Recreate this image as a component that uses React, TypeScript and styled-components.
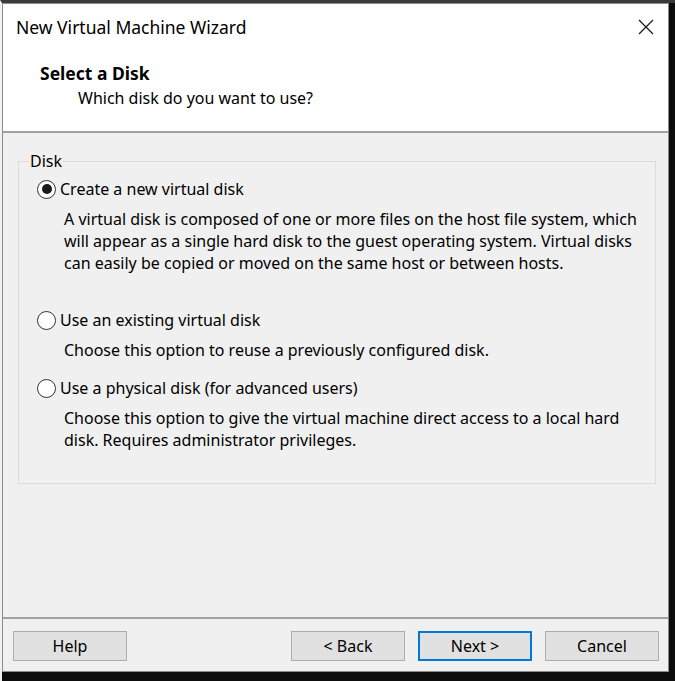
import React from 'react'
import styled, { createGlobalStyle } from 'styled-components'

const Global = createGlobalStyle`
  html, body {
    margin: 0;
    padding: 0;
    background: #0c0c0c;
  }
  * { box-sizing: border-box; }
`

const Screen = styled.div`
  width: 675px;
  height: 681px;
  background: #0c0c0c;
  border-top: 3px solid #3a3a3a;
  border-left: 2px solid #f2f2f2;
  padding-right: 6px;
  padding-bottom: 9px;
  display: flex;
`

const Dialog = styled.div`
  flex: 1;
  display: flex;
  flex-direction: column;
  background: #f0f0f0;
  border: 1px solid #8c8c8c;
  font-family: "Noto Sans", "Open Sans", sans-serif;
  color: #000;
`

const TitleBar = styled.div`
  height: 46px;
  display: flex;
  align-items: center;
  justify-content: space-between;
  padding: 0 14px 0 13px;
  background: #fff;
  font-size: 17.5px;
  color: #000;
`

const CloseIcon = () => (
  <svg width="16" height="16" viewBox="0 0 16 16">
    <path d="M1 1 L15 15 M15 1 L1 15" stroke="#1a1a1a" strokeWidth="1.3" />
  </svg>
)

const Header = styled.div`
  height: 83px;
  background: #fff;
  padding: 12px 0 0 37px;
  border-bottom: 2px solid #a0a0a0;
`

const HeaderTitle = styled.div`
  font-weight: 700;
  font-size: 17.5px;
  line-height: 22px;
`

const HeaderSub = styled.div`
  font-size: 16px;
  line-height: 22px;
  margin-top: 3px;
  padding-left: 38px;
`

const Body = styled.div`
  flex: 1;
  padding: 20px 12px 0 15px;
`

const Group = styled.fieldset`
  margin: 0;
  height: 331px;
  border: 1px solid #dcdcdc;
  border-radius: 0;
  padding: 4px 0 0 18px;
  font-size: 16px;

  legend {
    padding: 0 1px;
    margin-left: -8px;
    line-height: 16px;
  }
`

const Option = styled.div<{ $gap: number }>`
  margin-top: ${p => p.$gap}px;
`

const RadioRow = styled.label`
  display: flex;
  align-items: center;
  gap: 4px;
  line-height: 22px;
`

const Radio = styled.span<{ $on?: boolean }>`
  width: 19px;
  height: 19px;
  border-radius: 50%;
  border: 1.5px solid #333;
  background: #fff;
  display: flex;
  align-items: center;
  justify-content: center;

  &::after {
    content: '';
    width: 10px;
    height: 10px;
    border-radius: 50%;
    background: ${p => (p.$on ? '#1a1a1a' : 'transparent')};
  }
`

const Desc = styled.div`
  margin-top: 8px;
  padding-left: 27px;
  line-height: 22px;
  white-space: nowrap;
`

const Footer = styled.div`
  height: 54px;
  border-top: 2px solid #a0a0a0;
  display: flex;
  align-items: center;
  padding: 2px 9px 0 10px;
  gap: 13px;
`

const Button = styled.button<{ $primary?: boolean }>`
  width: 114px;
  height: 30px;
  background: #e1e1e1;
  border: ${p => (p.$primary ? '2px solid #0078d7' : '1px solid #adadad')};
  font-family: "Noto Sans", "Open Sans", sans-serif;
  font-size: 16px;
  color: #000;
  padding: 0;
`

const Spacer = styled.div`
  flex: 1;
`

const App = () => {
  return (
    <>
      <Global />
      <Screen>
        <Dialog>
          <TitleBar>
            <span>New Virtual Machine Wizard</span>
            <CloseIcon />
          </TitleBar>
          <Header>
            <HeaderTitle>Select a Disk</HeaderTitle>
            <HeaderSub>Which disk do you want to use?</HeaderSub>
          </Header>
          <Body>
            <Group>
              <legend>Disk</legend>
              <Option $gap={5}>
                <RadioRow><Radio $on />Create a new virtual disk</RadioRow>
                <Desc>
                  A virtual disk is composed of one or more files on the host file system, which<br />
                  will appear as a single hard disk to the guest operating system. Virtual disks<br />
                  can easily be copied or moved on the same host or between hosts.
                </Desc>
              </Option>
              <Option $gap={35}>
                <RadioRow><Radio />Use an existing virtual disk</RadioRow>
                <Desc>Choose this option to reuse a previously configured disk.</Desc>
              </Option>
              <Option $gap={16}>
                <RadioRow><Radio />Use a physical disk (for advanced users)</RadioRow>
                <Desc>
                  Choose this option to give the virtual machine direct access to a local hard<br />
                  disk. Requires administrator privileges.
                </Desc>
              </Option>
            </Group>
          </Body>
          <Footer>
            <Button>Help</Button>
            <Spacer />
            <Button>&lt; Back</Button>
            <Button $primary>Next &gt;</Button>
            <Button>Cancel</Button>
          </Footer>
        </Dialog>
      </Screen>
    </>
  )
}

export default App
